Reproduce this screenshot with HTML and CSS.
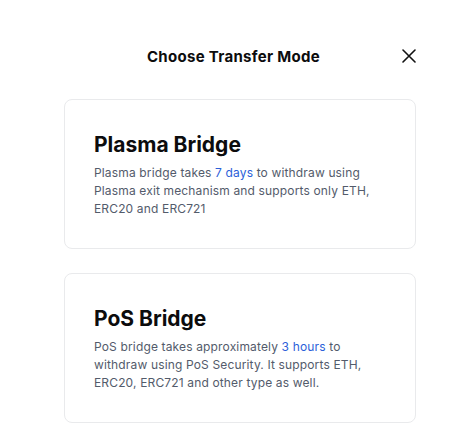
FILE: index.html
```html
<!DOCTYPE html>
<html>
<head>
<meta charset="utf-8">
<link rel="stylesheet" href="styles.css">
</head>
<body>
<div class="modal">
  <div class="header">
    <div class="title">Choose Transfer Mode</div>
    <button class="close" aria-label="Close">
      <svg width="14" height="14" viewBox="0 0 14 14"><path d="M1 1L13 13M13 1L1 13" stroke="#111" stroke-width="1.6" stroke-linecap="round"/></svg>
    </button>
  </div>
  <div class="cards">
    <div class="card">
      <h2 class="card-title">Plasma Bridge</h2>
      <p class="card-text">Plasma bridge takes <span class="hl">7 days</span> to withdraw using Plasma exit mechanism and supports only ETH, ERC20 and ERC721</p>
    </div>
    <div class="card">
      <h2 class="card-title">PoS Bridge</h2>
      <p class="card-text">PoS bridge takes approximately <span class="hl">3 hours</span> to withdraw using PoS Security. It supports ETH, ERC20, ERC721 and other type as well.</p>
    </div>
  </div>
</div>
</body>
</html>
```
FILE: styles.css
```css
html, body {
  margin: 0;
  padding: 0;
  background: #fff;
}
body {
  font-family: "Inter", "Liberation Sans", sans-serif;
  color: #0c0c0d;
}
.modal {
  width: 462px;
  height: 443px;
  box-sizing: border-box;
  padding: 46px 46px 0 64px;
}
.header {
  display: flex;
  align-items: center;
  justify-content: space-between;
  height: 20px;
}
.title {
  flex: 1;
  text-align: center;
  font-size: 15px;
  font-weight: 700;
  letter-spacing: 0.3px;
  padding-left: 2px;
}
.close {
  background: none;
  border: 0;
  padding: 0;
  width: 16px;
  height: 16px;
  display: flex;
  align-items: center;
  justify-content: center;
  margin-right: -1px;
}
.cards {
  margin-top: 33px;
  display: flex;
  flex-direction: column;
  gap: 24px;
  width: 352px;
}
.card {
  border: 1px solid #e9eaec;
  border-radius: 8px;
  height: 150px;
  box-sizing: border-box;
  padding: 32px 30px 0 29px;
}
.card-title {
  margin: 0 0 6px;
  font-size: 21px;
  font-weight: 700;
  line-height: 26px;
  color: #0c0c0d;
}
.card-text {
  margin: 0;
  width: 284px;
  font-size: 12px;
  letter-spacing: 0.15px;
  line-height: 18px;
  color: #535b6b;
}
.hl {
  color: #2c5fd9;
}
```
